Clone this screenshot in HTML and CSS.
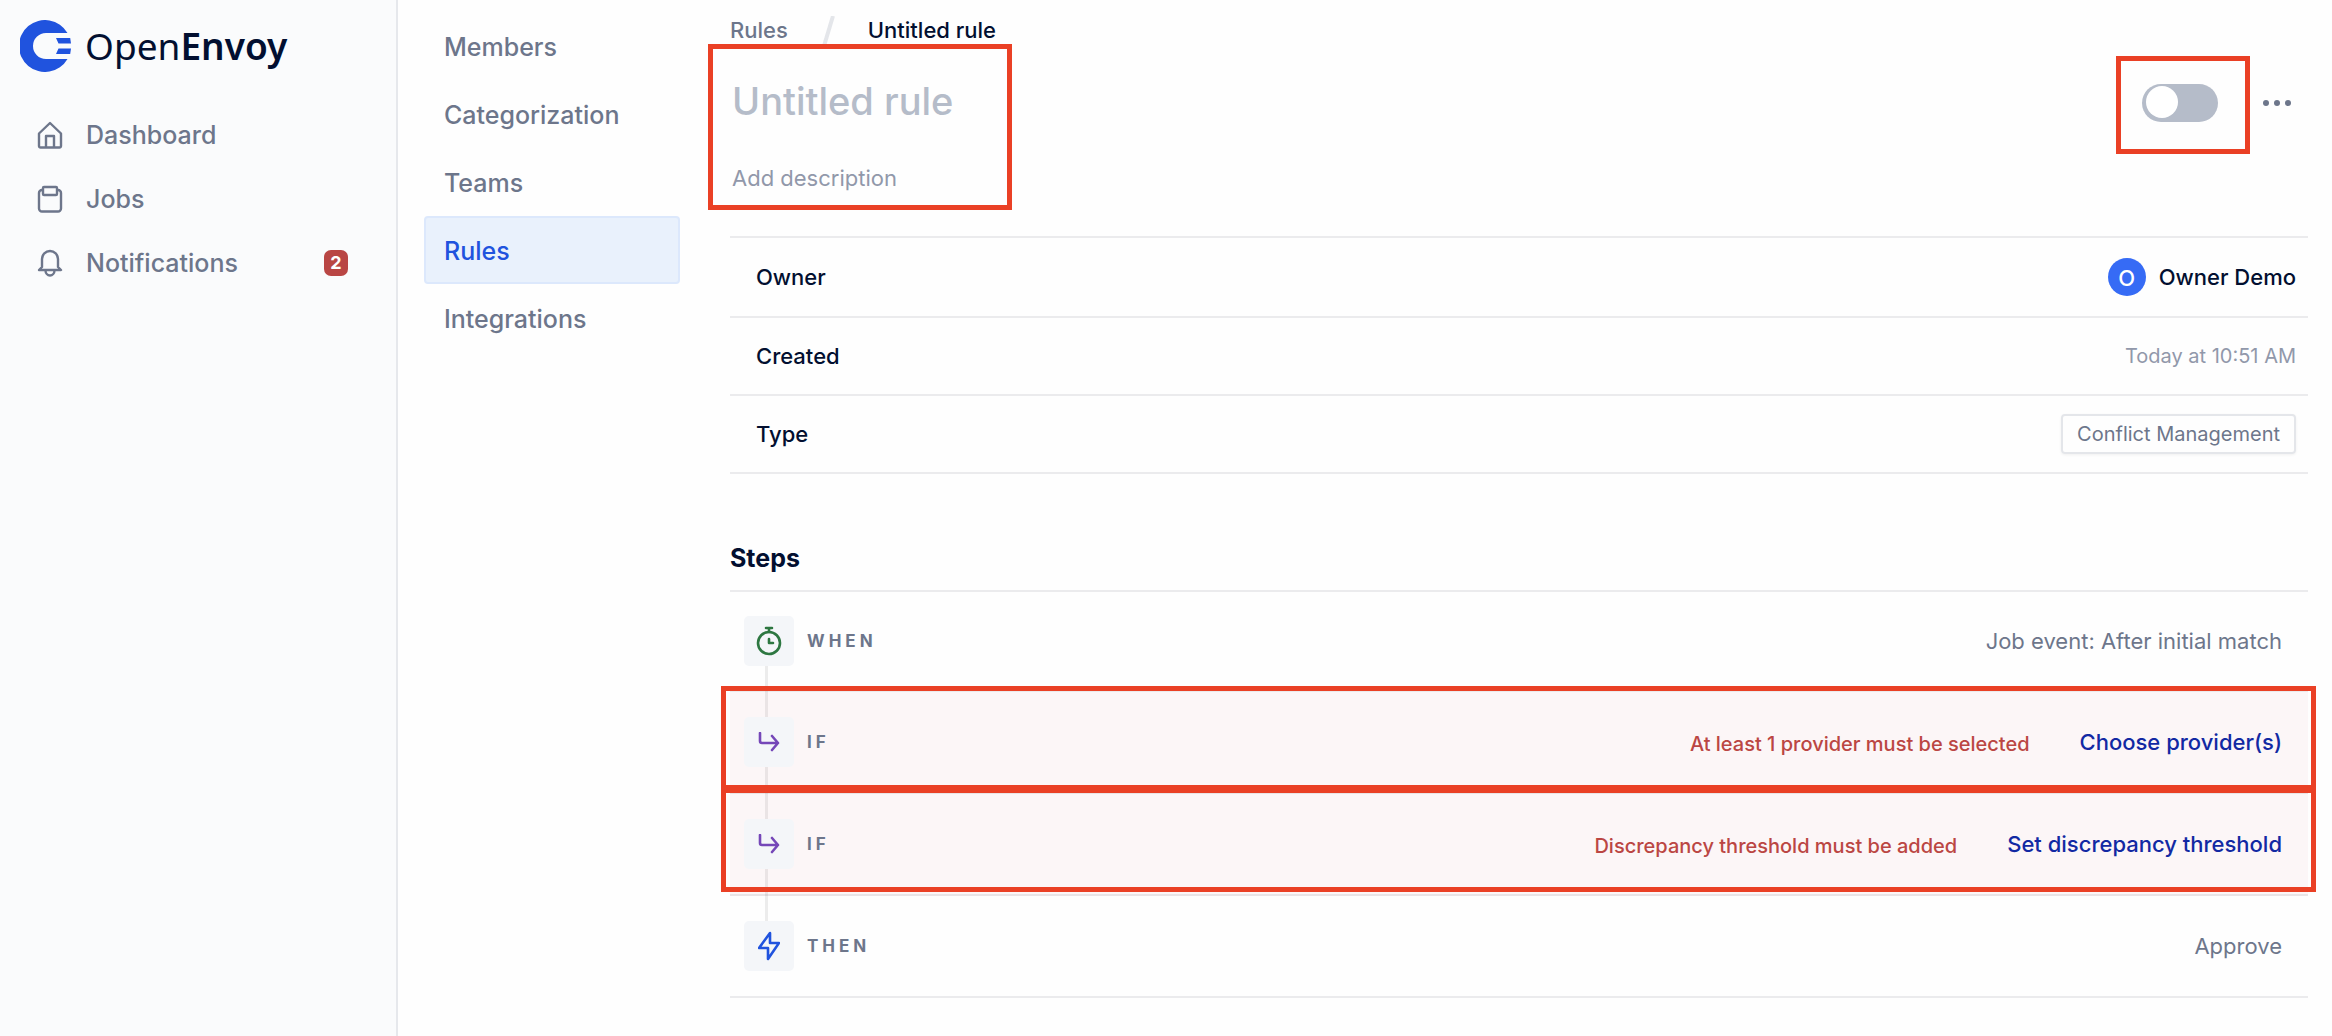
FILE: index.html
```html
<!DOCTYPE html>
<html lang="en">
<head>
	<meta charset="UTF-8"/>
	<meta name="viewport" content="width=device-width, initial-scale=1"/>
	<title>OpenEnvoy - Untitled rule</title>
	<link rel="stylesheet" href="styles.css">
</head>
<body>

<aside class="sidebar">
	<a class="logo" href="#">
		<svg width="52" height="52" viewBox="0 0 52 52" aria-hidden="true">
			<path d="M47.500 13H26a13 13 0 0 0 0 26h21.500A26 26 0 1 1 47.500 13z"/>
			<path d="M36 18h14.200l.8 5.500H38.500zM38.500 28.500H51l-.8 5.500H36z"/>
		</svg>
		<span class="logo-text">Open<b>Envoy</b></span>
	</a>
	<nav class="main-nav" aria-label="Main">
		<a href="#">
			<svg width="24" height="28" viewBox="0 0 24 28" aria-hidden="true">
				<path d="M1 12.500 12 2l11 10.500V25a1.500 1.500 0 0 1-1.500 1.500h-19A1.500 1.500 0 0 1 1 25zM8 26V15h8v11"/>
			</svg>
			Dashboard
		</a>
		<a href="#">
			<svg width="24" height="28" viewBox="0 0 24 28" aria-hidden="true">
				<path d="M5 5H4a3 3 0 0 0-3 3v15.500a3 3 0 0 0 3 3h16a3 3 0 0 0 3-3V8a3 3 0 0 0-3-3h-1"/>
				<rect x="5" y="2" width="14" height="8" rx="1"/>
			</svg>
			Jobs
		</a>
		<a href="#">
			<svg width="24" height="28" viewBox="0 0 24 28" aria-hidden="true">
				<path d="M4 18v-8a8 8 0 0 1 16 0v8l3 3H1zM7.500 21.500a4.500 5 0 0 0 9 0"/>
			</svg>
			Notifications
			<span class="badge">2</span>
		</a>
	</nav>
</aside>

<nav class="settings-nav" aria-label="Settings">
	<a href="#">Members</a>
	<a href="#">Categorization</a>
	<a href="#">Teams</a>
	<a href="#" class="active" aria-current="page">Rules</a>
	<a href="#">Integrations</a>
</nav>

<main>
	<div class="breadcrumb">
		<a href="#">Rules</a>
		<svg width="16" height="28" viewBox="0 0 16 28" aria-hidden="true">
			<path d="M13 0 4 30"/>
		</svg>
		<span>Untitled rule</span>
	</div>

	<header class="rule-header">
		<div class="rule-fields highlight">
			<input type="text" class="rule-title" placeholder="Untitled rule" aria-label="Rule name"/>
			<input type="text" class="rule-description" placeholder="Add description" aria-label="Rule description"/>
		</div>
		<div class="rule-actions">
			<label class="toggle highlight">
				<input type="checkbox" role="switch" aria-label="Enable rule"/>
			</label>
			<button type="button" class="more" aria-label="More options">
				<svg width="30" height="8" viewBox="0 0 30 8" aria-hidden="true">
					<circle cx="4" cy="4" r="3"/>
					<circle cx="15" cy="4" r="3"/>
					<circle cx="26" cy="4" r="3"/>
				</svg>
			</button>
		</div>
	</header>

	<dl class="details">
		<div>
			<dt>Owner</dt>
			<dd class="owner"><span class="avatar">O</span>Owner Demo</dd>
		</div>
		<div>
			<dt>Created</dt>
			<dd class="date">Today at 10:51 AM</dd>
		</div>
		<div>
			<dt>Type</dt>
			<dd><span class="tag">Conflict Management</span></dd>
		</div>
	</dl>

	<h2>Steps</h2>
	<ol class="steps">
		<li>
			<span class="step-icon when">
				<svg width="26" height="30" viewBox="0 0 26 30" aria-hidden="true">
					<circle cx="13" cy="17" r="11"/>
					<path d="M10 2h6M13 2v4M13 13v4h4"/>
				</svg>
			</span>
			<span class="step-name">WHEN</span>
			<span class="step-value">Job event: After initial match</span>
		</li>
		<li class="invalid highlight">
			<span class="step-icon if">
				<svg width="22" height="20" viewBox="0 0 22 20" aria-hidden="true">
					<path d="M2 1v8a2 2 0 0 0 2 2h16M14 4l6 7-6 7"/>
				</svg>
			</span>
			<span class="step-name">IF</span>
			<span class="step-error">At least 1 provider must be selected</span>
			<button type="button" class="step-action">Choose provider(s)</button>
		</li>
		<li class="invalid highlight">
			<span class="step-icon if">
				<svg width="22" height="20" viewBox="0 0 22 20" aria-hidden="true">
					<path d="M2 1v8a2 2 0 0 0 2 2h16M14 4l6 7-6 7"/>
				</svg>
			</span>
			<span class="step-name">IF</span>
			<span class="step-error">Discrepancy threshold must be added</span>
			<button type="button" class="step-action">Set discrepancy threshold</button>
		</li>
		<li>
			<span class="step-icon then">
				<svg width="22" height="30" viewBox="0 0 22 30" aria-hidden="true">
					<path d="M12 2 1 17h9v11l11-16h-9z"/>
				</svg>
			</span>
			<span class="step-name">THEN</span>
			<span class="step-value">Approve</span>
		</li>
	</ol>
</main>

</body>
</html>
```
FILE: styles.css
```css
* {
    box-sizing: border-box;
}

body {
    display: flex;
    min-height: 100vh;
    margin: 0;
    font-family: Inter, "Liberation Sans", sans-serif;
    font-size: 22px;
    line-height: 28px;
    color: #020f30;
    background: #fefefe;
}

a {
    color: inherit;
    text-decoration: none;
}

button, input {
    font: inherit;
    color: inherit;
    padding: 0;
    border: none;
    background: none;
}

button {
    cursor: pointer;
}

svg {
    flex: none;
    fill: none;
}

/* Sidebar */
.sidebar {
    flex: none;
    width: 398px;
    padding-top: 20px;
    background: #fafbfc;
    border-right: 2px solid #e6e8ec;
}

.logo {
    display: flex;
    align-items: center;
    gap: 13px;
    padding-left: 20px;
}

.logo svg {
    fill: #2053de;
}

.logo-text {
    font-family: "Noto Sans", sans-serif;
    font-size: 37px;
    line-height: 52px;
}

.logo-text b {
    font-weight: 600;
}

.main-nav {
    margin-top: 31px;
}

.main-nav a {
    display: flex;
    align-items: center;
    gap: 24px;
    height: 64px;
    padding: 0 48px 0 38px;
    font-size: 25px;
    font-weight: 500;
    color: #6d768b;
}

.main-nav svg {
    overflow: visible;
    stroke: #6d768b;
    stroke-width: 2.4;
    stroke-linejoin: round;
}

.badge {
    width: 24px;
    margin-left: auto;
    border-radius: 7px;
    font-size: 18px;
    font-weight: 700;
    line-height: 26px;
    text-align: center;
    color: #fff;
    background: #b94644;
}

/* Settings menu */
.settings-nav {
    flex: none;
    width: 282px;
    padding: 12px 0 0 26px;
}

.settings-nav a {
    display: flex;
    align-items: center;
    height: 68px;
    padding: 1px 0 0 18px;
    border: 2px solid transparent;
    border-radius: 4px;
    font-size: 25px;
    font-weight: 500;
    color: #6d768b;
}

.settings-nav .active {
    color: #2053de;
    background: #e9f1fc;
    border-color: #dce8fc;
}

/* Rule page */
main {
    flex: 1;
    min-width: 0;
    padding: 16px 24px 38px 50px;
}

.breadcrumb {
    display: flex;
    gap: 32px;
    font-weight: 500;
}

.breadcrumb a {
    color: #6d768b;
}

.breadcrumb svg {
    stroke: #e4e6ea;
    stroke-width: 4;
}

.rule-header {
    display: flex;
    justify-content: space-between;
    align-items: flex-start;
    height: 192px;
}

.rule-fields {
    display: flex;
    flex-direction: column;
    gap: 30px;
    width: 278px;
    padding: 28px 0 8px 2px;
}

.rule-title {
    height: 58px;
    font-size: 38px;
    font-weight: 500;
}

.rule-description {
    height: 36px;
}

.rule-title::placeholder {
    color: #b5bcc9;
}

.rule-description::placeholder {
    color: #9198aa;
}

.rule-actions {
    display: flex;
    align-items: center;
    gap: 44px;
    height: 118px;
    padding-right: 16px;
}

.toggle {
    display: flex;
}

.toggle input {
    appearance: none;
    display: flex;
    width: 76px;
    height: 38px;
    margin: 0;
    padding: 2px 4px;
    border-radius: 19px;
    background: #b5bcc9;
    cursor: pointer;
}

.toggle input::before {
    content: "";
    width: 32px;
    height: 32px;
    border-radius: 50%;
    background: #fff;
}

.toggle input:checked {
    justify-content: flex-end;
    background: #2053de;
}

.more {
    display: flex;
}

.more svg {
    fill: #6d768b;
}

.details {
    margin: 0;
    border-top: 2px solid #ebebed;
}

.details div {
    display: flex;
    justify-content: space-between;
    align-items: center;
    padding: 18px 12px 18px 26px;
    border-bottom: 2px solid #ebebed;
    font-weight: 500;
    line-height: 40px;
}

.details dd {
    margin: 0;
}

.owner {
    display: flex;
    align-items: center;
    gap: 13px;
    height: 42px;
}

.avatar {
    width: 38px;
    height: 38px;
    border-radius: 50%;
    font-size: 22px;
    text-align: center;
    color: #fff;
    background: #366bf5;
}

.details .date {
    font-size: 20px;
    font-weight: 400;
    color: #9198aa;
}

.tag {
    display: block;
    padding: 0 14px;
    border: 2px solid #e4e6ea;
    border-radius: 4px;
    box-shadow: 0 1px 3px rgba(0, 0, 0, 0.06);
    font-size: 20px;
    font-weight: 400;
    line-height: 36px;
    color: #6d768b;
}

h2 {
    margin: 68px 0 16px;
    font-size: 25px;
    font-weight: 700;
    line-height: 32px;
}

/* Steps */
.steps {
    margin: 0;
    padding: 0;
    list-style: none;
    border-top: 2px solid #ebebed;
}

.steps li {
    position: relative;
    display: flex;
    align-items: center;
    height: 102px;
    padding: 0 26px 0 14px;
    border-bottom: 2px solid #ebebed;
}

.steps li:first-child {
    height: 100px;
}

.steps .invalid {
    background: #fcf6f7;
    border-bottom-color: #e9e4e6;
}

/* Line that joins the step icons */
.steps li::before {
    content: "";
    position: absolute;
    top: 0;
    bottom: -2px;
    left: 35px;
    width: 3px;
    background: rgba(20, 20, 30, 0.08);
}

.steps li:first-child::before {
    top: 50%;
}

.steps li:last-child::before {
    bottom: 50%;
}

.step-icon {
    position: relative;
    display: flex;
    align-items: center;
    justify-content: center;
    width: 50px;
    height: 50px;
    margin-right: 13px;
    border-radius: 5px;
    background: #f4f6f9;
}

.step-icon svg {
    stroke-width: 2.6;
    stroke-linecap: round;
    stroke-linejoin: round;
}

.when svg {
    stroke: #2d7741;
}

.if svg {
    stroke: #7547b8;
}

.then svg {
    stroke: #2053de;
}

.step-name {
    margin-right: auto;
    font-size: 17px;
    font-weight: 700;
    letter-spacing: 4px;
    color: #6d768b;
}

.step-value {
    color: #6d768b;
}

.step-error {
    margin-right: 50px;
    padding-top: 4px;
    font-size: 20px;
    font-weight: 500;
    color: #bb4643;
}

.step-action {
    font-weight: 500;
    color: #1229a3;
}

/* Red callout frames */
.highlight {
    position: relative;
}

.highlight::after {
    content: "";
    position: absolute;
    inset: -6px -8px 2px -9px;
    border: 5px solid #ea4025;
    pointer-events: none;
}

.rule-fields::after {
    inset: 0 -4px -6px -22px;
}

.toggle::after {
    inset: -28px -32px -32px -26px;
}

@media (max-width: 1200px) {
    .sidebar {
        width: 320px;
    }

    .settings-nav {
        width: 230px;
    }
}
```
